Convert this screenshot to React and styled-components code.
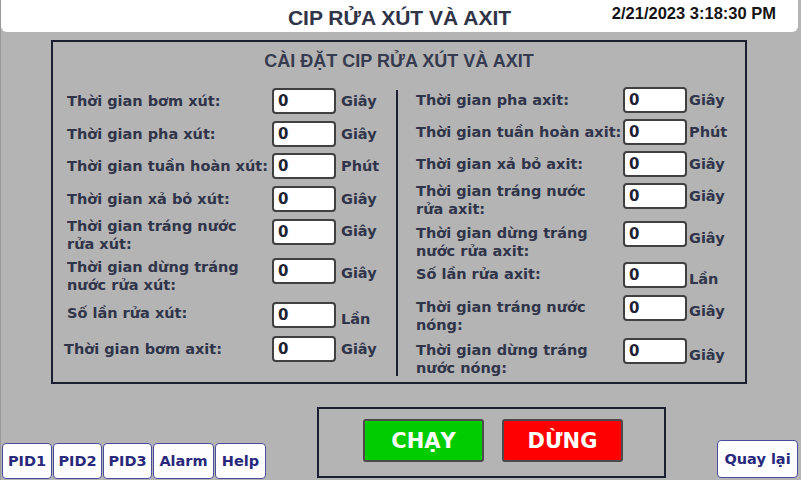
import React from 'react'
import styled, { createGlobalStyle } from 'styled-components'

const LABEL_FONT = '"DejaVu Sans", Verdana, sans-serif'
const HEAD_FONT = '"Liberation Sans", Arial, sans-serif'

const GlobalStyle = createGlobalStyle`
    html, body {
        margin: 0;
        padding: 0;
        background: #b4b4b4;
    }
`

const Screen = styled.div`
    width: 801px;
    height: 480px;
    overflow: hidden;
    display: flex;
    flex-direction: column;
    background: #b4b4b4;
    box-shadow: inset 1px 0 0 #9a9a9a;
`

const Header = styled.header`
    height: 32px;
    margin: 0 3px 0 1px;
    display: grid;
    grid-template-columns: 1fr auto 1fr;
    align-items: start;
    background: #ffffff;
    border-radius: 0 0 6px 6px;
`

const Title = styled.h1`
    grid-column: 2;
    margin: 0;
    font-family: ${HEAD_FONT};
    font-size: 21px;
    font-weight: bold;
    line-height: 35px;
    color: #2f3447;
    white-space: nowrap;
`

const Clock = styled.div`
    justify-self: end;
    padding: 4px 22px 0 0;
    font-family: ${HEAD_FONT};
    font-size: 16.5px;
    font-weight: bold;
    line-height: 18px;
    color: #141414;
    white-space: nowrap;
`

const Panel = styled.section`
    height: 344px;
    margin: 8px 54px 0 51px;
    box-sizing: border-box;
    border: 2px solid #1b1f30;
    display: flex;
    flex-direction: column;
`

const PanelTitle = styled.h2`
    margin: 0;
    height: 38px;
    font-family: ${HEAD_FONT};
    font-size: 18px;
    font-weight: bold;
    line-height: 38px;
    text-align: center;
    color: #363b4f;
`

const PanelBody = styled.div`
    display: flex;
    flex: 1;
`

const Column = styled.div`
    display: flex;
    flex-direction: column;
    width: ${p => p.$width}px;
    box-sizing: border-box;
    padding: ${p => p.$top}px 0 0 ${p => p.$left}px;
`

const Divider = styled.div`
    width: 2px;
    height: 286px;
    margin-top: 10px;
    background: #1b1f30;
`

const Row = styled.div`
    display: flex;
    align-items: center;
    height: 26px;
    margin-top: ${p => p.$gap}px;
`

const Label = styled.div`
    width: ${p => p.$width}px;
    flex: none;
    margin-top: ${p => p.$dy * 2}px;
    font-family: ${LABEL_FONT};
    font-size: 14.5px;
    font-weight: bold;
    line-height: 18px;
    color: #30354a;
    white-space: nowrap;
`

const Field = styled.input`
    width: 64px;
    height: 26px;
    flex: none;
    box-sizing: border-box;
    margin: 0;
    padding: 0 4px;
    border: 2px solid #404040;
    border-radius: 4px;
    background: #ffffff;
    font-family: ${LABEL_FONT};
    font-size: 15px;
    font-weight: bold;
    color: #1e2230;
    outline: none;
`

const Unit = styled.span`
    margin-left: ${p => p.$space}px;
    margin-top: ${p => p.$dy * 2}px;
    font-family: ${LABEL_FONT};
    font-size: 14.5px;
    font-weight: bold;
    line-height: 18px;
    color: #30354a;
`

const Footer = styled.footer`
    flex: 1;
    display: flex;
    align-items: flex-end;
    padding: 0 3px 1px 2px;
`

const NavGroup = styled.nav`
    display: flex;
    gap: 1px;
`

const NavButton = styled.button`
    width: ${p => p.$width}px;
    height: ${p => p.$height || 36}px;
    padding: 0;
    box-sizing: border-box;
    border: 1px solid #4b4b9b;
    border-radius: 4px;
    background: #fdfdfd;
    font-family: ${LABEL_FONT};
    font-size: 14.5px;
    font-weight: bold;
    color: #29297c;
    cursor: pointer;
`

const BackButton = styled(NavButton)`
    margin: 0 0 1px auto;
`

const RunPanel = styled.div`
    width: 349px;
    height: 71px;
    margin: 0 0 1px 51px;
    box-sizing: border-box;
    border: 2px solid #1b1f30;
    display: flex;
    align-items: flex-start;
    gap: 18px;
    padding: 10px 0 0 44px;
`

const ActionButton = styled.button`
    width: 121px;
    height: 43px;
    box-sizing: border-box;
    border: 2px solid #4a4a4a;
    border-radius: 3px;
    background: ${p => p.$color};
    font-family: ${LABEL_FONT};
    font-size: 21px;
    font-weight: bold;
    color: #ffffff;
    cursor: pointer;
`

const LEFT_ROWS = [
    { gap: 0, label: ['Thời gian bơm xút:'], unit: 'Giây' },
    { gap: 7, label: ['Thời gian pha xút:'], unit: 'Giây' },
    { gap: 6, label: ['Thời gian tuần hoàn xút:'], unit: 'Phút' },
    { gap: 7, label: ['Thời gian xả bỏ xút:'], unit: 'Giây' },
    { gap: 7, label: ['Thời gian tráng nước', 'rửa xút:'], unit: 'Giây', dy: 3, udy: -1 },
    { gap: 13, label: ['Thời gian dừng tráng', 'nước rửa xút:'], unit: 'Giây', dy: 5, udy: 1.5 },
    { gap: 18, label: ['Số lần rửa xút:'], unit: 'Lần', dy: -2, udy: 4 },
    { gap: 8, label: ['Thời gian bơm axit:'], unit: 'Giây', shift: -3 },
]

const RIGHT_ROWS = [
    { gap: 0, label: ['Thời gian pha axit:'], unit: 'Giây' },
    { gap: 6, label: ['Thời gian tuần hoàn axit:'], unit: 'Phút' },
    { gap: 6, label: ['Thời gian xả bỏ axit:'], unit: 'Giây' },
    { gap: 6, label: ['Thời gian tráng nước', 'rửa axit:'], unit: 'Giây', dy: 3.5 },
    { gap: 12, label: ['Thời gian dừng tráng', 'nước rửa axit:'], unit: 'Giây', dy: 8, udy: 3.5 },
    { gap: 15, label: ['Số lần rửa axit:'], unit: 'Lần', dy: -1.5, udy: 3.5 },
    { gap: 7, label: ['Thời gian tráng nước', 'nóng:'], unit: 'Giây', dy: 8, udy: 2.5 },
    { gap: 17, label: ['Thời gian dừng tráng', 'nước nóng:'], unit: 'Giây', dy: 7.5, udy: 3.5 },
]

const NAV = [
    { name: 'PID1', width: 50 },
    { name: 'PID2', width: 49 },
    { name: 'PID3', width: 49 },
    { name: 'Alarm', width: 61 },
    { name: 'Help', width: 51 },
]

function SettingRow({ row, labelWidth, unitSpace }) {
    const shift = row.shift || 0
    return (
        <Row $gap={row.gap}>
            <Label $width={labelWidth} $dy={row.dy || 0} style={shift ? { marginLeft: shift, width: labelWidth - shift } : undefined}>
                {row.label.map((line, i) => (
                    <div key={i}>{line}</div>
                ))}
            </Label>
            <Field readOnly value="0" />
            <Unit $space={unitSpace} $dy={row.udy || 0}>{row.unit}</Unit>
        </Row>
    )
}

export default function App() {
    return (
        <Screen>
            <GlobalStyle />
            <Header>
                <Title>CIP RỬA XÚT VÀ AXIT</Title>
                <Clock>2/21/2023 3:18:30 PM</Clock>
            </Header>

            <Panel>
                <PanelTitle>CÀI ĐẶT CIP RỬA XÚT VÀ AXIT</PanelTitle>
                <PanelBody>
                    <Column $width={343} $left={14} $top={8}>
                        {LEFT_ROWS.map(row => (
                            <SettingRow key={row.label.join(' ')} row={row} labelWidth={205} unitSpace={5} />
                        ))}
                    </Column>
                    <Divider />
                    <Column $width={340} $left={18} $top={7}>
                        {RIGHT_ROWS.map(row => (
                            <SettingRow key={row.label.join(' ')} row={row} labelWidth={207} unitSpace={2} />
                        ))}
                    </Column>
                </PanelBody>
            </Panel>

            <Footer>
                <NavGroup>
                    {NAV.map(item => (
                        <NavButton key={item.name} $width={item.width}>{item.name}</NavButton>
                    ))}
                </NavGroup>
                <RunPanel>
                    <ActionButton $color="#00cc00">CHẠY</ActionButton>
                    <ActionButton $color="#ff0000">DỪNG</ActionButton>
                </RunPanel>
                <BackButton $width={81} $height={38}>Quay lại</BackButton>
            </Footer>
        </Screen>
    )
}
